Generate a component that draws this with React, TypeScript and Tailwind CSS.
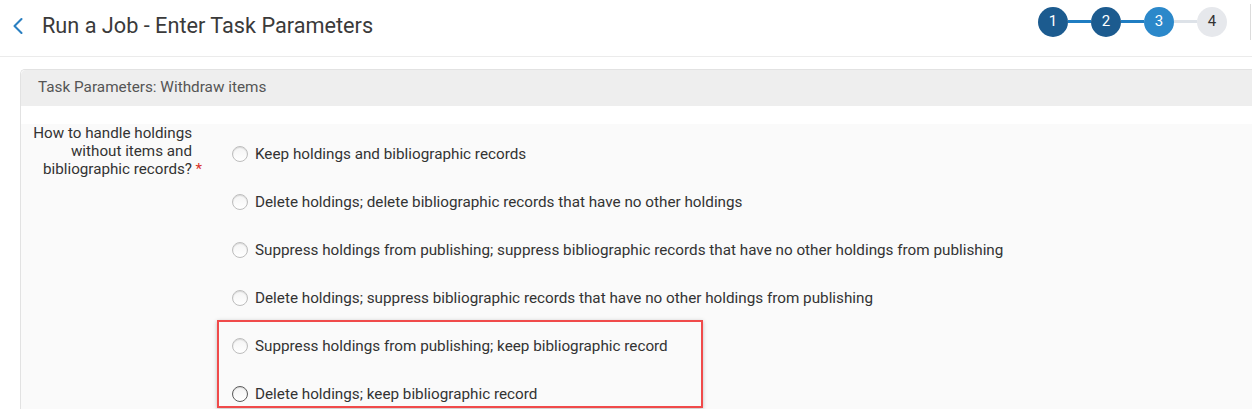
import { ChevronLeft } from 'lucide-react'

const options = [
  'Keep holdings and bibliographic records',
  'Delete holdings; delete bibliographic records that have no other holdings',
  'Suppress holdings from publishing; suppress bibliographic records that have no other holdings from publishing',
  'Delete holdings; suppress bibliographic records that have no other holdings from publishing',
  'Suppress holdings from publishing; keep bibliographic record',
  'Delete holdings; keep bibliographic record',
]

const steps = [
  { n: 1, circle: 'bg-[#1c5b8f] text-white', line: 'bg-[#1f7dc2]' },
  { n: 2, circle: 'bg-[#1c5b8f] text-white', line: 'bg-[#1f7dc2]' },
  { n: 3, circle: 'bg-[#2b88ca] text-white', line: 'bg-[#dde2e8]' },
  { n: 4, circle: 'bg-[#e6e8ec] text-[#333]', line: '' },
]

const Radio = ({ dark }: { dark?: boolean }) => (
  <span
    className={`h-[16px] w-[16px] shrink-0 rounded-full border bg-gradient-to-b from-[#f4f4f4] to-white shadow-[inset_0_1px_1px_rgba(0,0,0,0.12)] ${
      dark ? 'border-[#5a5a5a]' : 'border-[#bdbdbd]'
    }`}
  />
)

const OptionRow = ({ label, dark }: { label: string; dark?: boolean }) => (
  <div className="flex h-[48px] items-center gap-[7px]">
    <Radio dark={dark} />
    <span className="text-[15.25px] text-[#333]">{label}</span>
  </div>
)

export default function App() {
  return (
    <div className="min-h-screen bg-white font-['Roboto',sans-serif]">
      <header className="flex h-[57px] items-center border-b border-[#ebebeb]">
        <ChevronLeft className="mb-[4px] ml-[4px] h-[28px] w-[28px] text-[#2a7fc1]" strokeWidth={1.8} />
        <h1 className="mb-[4px] ml-[10px] text-[21.7px] text-[#3a3a3a]">Run a Job - Enter Task Parameters</h1>
        <div className="mb-[13px] ml-auto flex items-center">
          {steps.map((s) => (
            <div key={s.n} className="flex items-center">
              <span
                className={`flex h-[30px] w-[30px] items-center justify-center rounded-full text-[15px] ${s.circle}`}
              >
                {s.n}
              </span>
              {s.line && <span className={`h-[3px] w-[23px] ${s.line}`} />}
            </div>
          ))}
          <span className="ml-[23px] h-[36px] w-[1px] bg-[#dcdcdc]" />
          <span className="w-[1px]" />
        </div>
      </header>

      <main className="pl-[20px] pt-[12px]">
        <section className="rounded-tl-[5px] border-l border-t border-[#e2e2e2]">
          <div className="flex h-[36px] items-center rounded-tl-[5px] bg-[#eeeeee] px-[17px] pb-[2px] text-[15.3px] text-[#555]">
            Task Parameters: Withdraw items
          </div>
          <div className="mt-[18px] flex bg-[#fafafa] pb-[4px]">
            <label className="w-[171px] shrink-0 text-right text-[15.2px] leading-[18px] text-[#333]">
              How to handle holdings
              <br />
              without items and
              <br />
              <span className="relative">
                bibliographic records?
                <span className="absolute -right-[10px] top-0 text-[#d9342b]">*</span>
              </span>
            </label>
            <div className="ml-[40px] pt-[6px]">
              {options.slice(0, 4).map((o) => (
                <OptionRow key={o} label={o} />
              ))}
              <div className="relative">
                <span className="pointer-events-none absolute -left-[15px] -top-[2px] h-[88px] w-[486px] border-2 border-[#f04a4a] shadow-[0_1px_4px_rgba(0,0,0,0.25)]" />
                <OptionRow label={options[4]} />
                <OptionRow label={options[5]} dark />
              </div>
            </div>
          </div>
        </section>
      </main>
    </div>
  )
}
